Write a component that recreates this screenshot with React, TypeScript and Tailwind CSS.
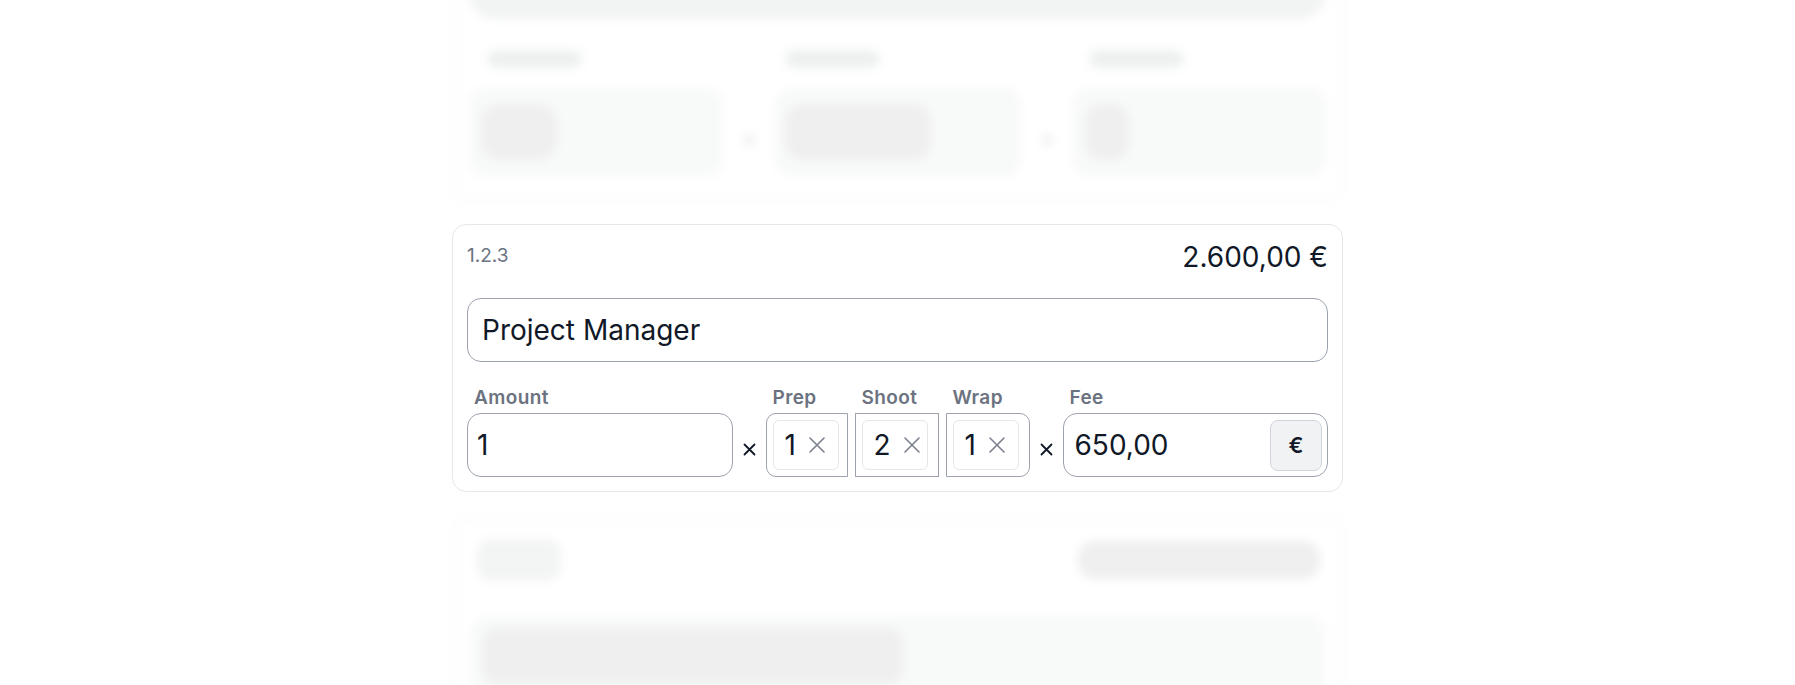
function Times() {
  return (
    <svg width="13" height="13" viewBox="0 0 13 13" className="mt-[9px]">
      <path d="M1.5 1.5 L11.5 11.5 M11.5 1.5 L1.5 11.5" stroke="#111827" strokeWidth="1.8" strokeLinecap="round" />
    </svg>
  )
}

function Multiplier({ value, className }: { value: string; className: string }) {
  return (
    <div className={`h-[64px] border border-[#9ca3af] pl-[6px] pr-[10px] py-[6px] ${className}`}>
      <div className="flex h-full w-[66px] items-center gap-[13px] rounded-[6px] border border-[#e5e7eb] pl-[11px]">
        <span className="text-[28px] leading-none text-[#111827]">{value}</span>
        <svg width="16" height="16" viewBox="0 0 16 16">
          <path d="M1 1 L15 15 M15 1 L1 15" stroke="#7b818c" strokeWidth="1.6" strokeLinecap="round" />
        </svg>
      </div>
    </div>
  )
}

function Label({ children }: { children: React.ReactNode }) {
  return (
    <div className="h-[24px] px-[7px] text-[19px] font-semibold leading-[24px] tracking-[0.02em] text-[#6b7280]">
      {children}
    </div>
  )
}

function SkeletonTop() {
  return (
    <div className="h-[251px] rounded-[16px] border border-[#ececec] bg-white px-[16px] pb-[23px] pt-[15px] blur-[5px]">
      <div className="h-[54px] rounded-full bg-[#f2f3f3]" />
      <div className="mt-[31px] flex items-start">
        <div className="w-[254px]">
          <div className="ml-[18px] h-[18px] w-[95px] rounded-full bg-[#eef0f0]" />
          <div className="mt-[20px] flex h-[88px] items-center rounded-[16px] bg-[#f8f9f9] px-[12px]">
            <div className="h-[56px] w-[76px] rounded-[18px] bg-[#efefef]" />
          </div>
        </div>
        <div className="flex w-[52px] justify-center pt-[84px]">
          <div className="h-[12px] w-[12px] rounded-full bg-[#f0f0f0]" />
        </div>
        <div className="w-[246px]">
          <div className="ml-[10px] h-[18px] w-[95px] rounded-full bg-[#eef0f0]" />
          <div className="mt-[20px] flex h-[88px] items-center rounded-[16px] bg-[#f8f9f9] px-[10px]">
            <div className="h-[56px] w-[146px] rounded-[18px] bg-[#efefef]" />
          </div>
        </div>
        <div className="flex w-[52px] justify-center pt-[84px]">
          <div className="h-[12px] w-[12px] rounded-full bg-[#f0f0f0]" />
        </div>
        <div className="flex-1">
          <div className="ml-[16px] h-[18px] w-[95px] rounded-full bg-[#eef0f0]" />
          <div className="mt-[20px] flex h-[88px] items-center rounded-[16px] bg-[#f8f9f9] px-[12px]">
            <div className="h-[56px] w-[44px] rounded-[18px] bg-[#efefef]" />
          </div>
        </div>
      </div>
    </div>
  )
}

function SkeletonBottom() {
  return (
    <div className="h-[220px] rounded-[16px] border border-[#ececec] bg-white px-[18px] pt-[15px] blur-[5px]">
      <div className="flex h-[56px] items-center justify-between">
        <div className="ml-[6px] h-[42px] w-[84px] rounded-[14px] bg-[#f3f4f4]" />
        <div className="mr-[4px] h-[38px] w-[242px] rounded-[16px] bg-[#efefef]" />
      </div>
      <div className="mt-[28px] h-[96px] rounded-[16px] bg-[#f8f9f9] p-[12px]">
        <div className="h-[56px] w-[420px] rounded-[14px] bg-[#efefef]" />
      </div>
    </div>
  )
}

export default function App() {
  return (
    <div className="h-[685px] overflow-hidden bg-white font-[Inter,sans-serif]">
      <div className="mx-auto -mt-[51px] flex w-[891px] flex-col gap-[24px]">
        <SkeletonTop />

        <div className="rounded-[14px] border border-[#e5e7eb] bg-white p-[14px]">
          {/* header */}
          <div className="flex h-[35px] items-center justify-between">
            <span className="text-[19px] text-[#6b7280]">1.2.3</span>
            <span className="text-[28px] text-[#111827]">2.600,00 €</span>
          </div>

          {/* title */}
          <div className="mt-[24px] flex h-[64px] items-center rounded-[14px] border border-[#9ca3af] px-[14px] text-[28px] text-[#111827]">
            Project Manager
          </div>

          {/* amount x days x fee */}
          <div className="mt-[24px] flex">
            <div className="flex flex-1 flex-col">
              <Label>Amount</Label>
              <div className="mt-[3px] flex h-[64px] items-center rounded-[14px] border border-[#9ca3af] pl-[9px] text-[28px] text-[#111827]">
                1
              </div>
            </div>

            <div className="flex w-[33px] flex-col">
              <div className="h-[27px]" />
              <div className="flex h-[64px] items-center justify-center">
                <Times />
              </div>
            </div>

            <div className="flex gap-[7px]">
              <div className="flex flex-col">
                <Label>Prep</Label>
                <div className="mt-[3px]">
                  <Multiplier value="1" className="w-[82px] rounded-l-[10px]" />
                </div>
              </div>
              <div className="flex flex-col">
                <Label>Shoot</Label>
                <div className="mt-[3px]">
                  <Multiplier value="2" className="w-[84px]" />
                </div>
              </div>
              <div className="flex flex-col">
                <Label>Wrap</Label>
                <div className="mt-[3px]">
                  <Multiplier value="1" className="w-[84px] rounded-r-[10px]" />
                </div>
              </div>
            </div>

            <div className="flex w-[33px] flex-col">
              <div className="h-[27px]" />
              <div className="flex h-[64px] items-center justify-center">
                <Times />
              </div>
            </div>

            <div className="flex flex-1 flex-col">
              <Label>Fee</Label>
              <div className="mt-[3px] flex h-[64px] items-center justify-between rounded-[14px] border border-[#9ca3af] pl-[11px] pr-[5px] text-[28px] text-[#111827]">
                <span>650,00</span>
                <div className="flex h-[51px] w-[52px] items-center justify-center rounded-[8px] border border-[#d1d5db] bg-[#f1f2f3] text-[22px] font-semibold">
                  €
                </div>
              </div>
            </div>
          </div>
        </div>

        <SkeletonBottom />
      </div>
    </div>
  )
}
